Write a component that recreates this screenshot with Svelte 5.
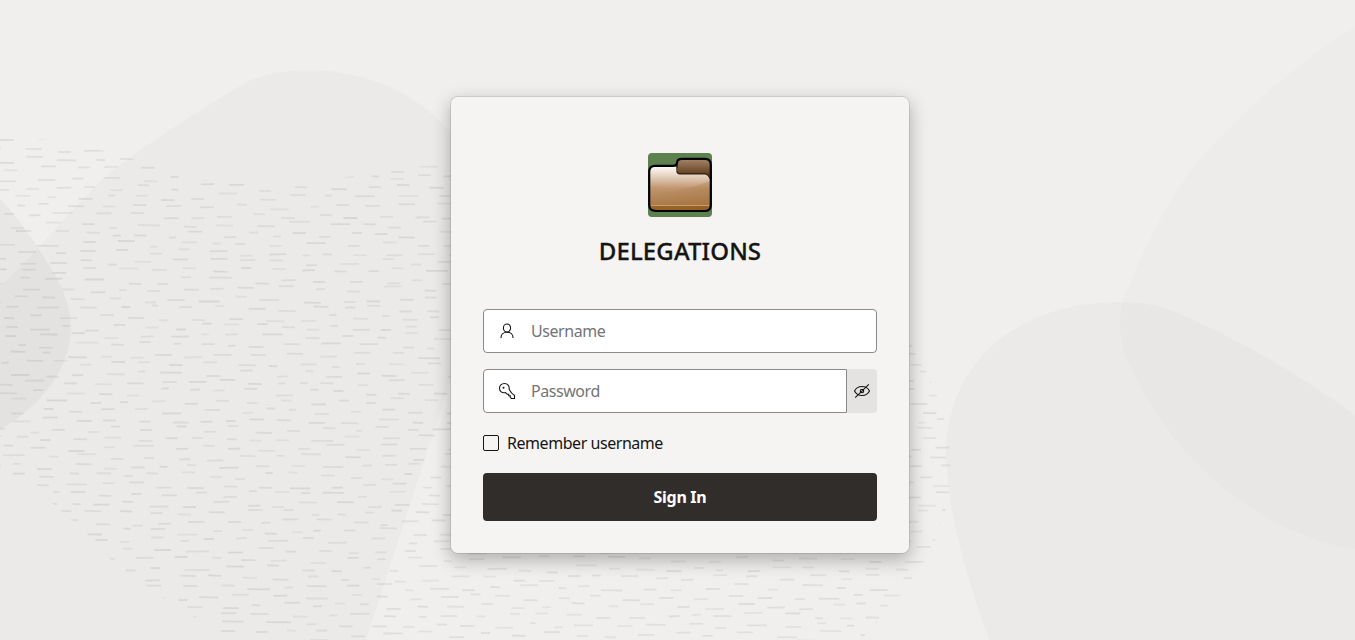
<script>
  let username = $state('');
  let password = $state('');
  let remember = $state(false);

  // Seeded generator keeps the dash texture identical on every load.
  let seed = 4207;
  const rnd = () => {
    seed = (seed * 16807) % 2147483647;
    return seed / 2147483647;
  };

  const dashes = [];
  for (let y = 141; y < 644; y += 9.3) {
    let x = -rnd() * 30;
    while (x < 960) {
      const w = 6 + rnd() * 8 + rnd() * rnd() * 13;
      const dy = (rnd() - 0.5) * 7;
      const tilt = (rnd() - 0.45) * 0.7;
      dashes.push({
        d: `M${x.toFixed(1)} ${(y + dy).toFixed(1)}l${w.toFixed(1)} ${tilt.toFixed(1)}`,
        o: 0.05 + rnd() * 0.03,
      });
      x += w + 11 + rnd() * 14;
    }
  }
</script>

<svg class="backdrop" viewBox="0 0 1355 640" preserveAspectRatio="xMidYMid slice" aria-hidden="true">
  <defs>
    <clipPath id="field">
      <path d="M0 136C60 138 120 153 160 168C220 192 320 188 385 168L450 164L860 280C925 345 951 415 951 470C948 540 910 590 860 640H240C190 618 140 585 100 550C70 514 30 484 0 471Z" />
    </clipPath>
  </defs>
  <g fill="#000" fill-opacity=".021">
    <path d="M0 286C16 271 25 262 38 248C58 226 90 189 117 167C140 149 220 96 247 82C286 62 390 60 451 133C510 200 480 300 449 385L366 640H0Z" />
    <path fill-opacity=".03" d="M0 199C13 212 28 232 38 248C57 276 71 300 71 327C71 370 40 406 0 430Z" />
    <path fill-opacity=".012" d="M1355 27C1307 55 1247 106 1200 159C1172 190 1141 254 1127 290C1116 312 1118 342 1130 366C1164 443 1243 530 1355 550Z" />
    <path d="M989 640C967 580 946 506 946 453C946 367 1012 302 1120 302C1140 302 1157 305 1173 311C1240 339 1303 377 1355 415V640Z" />
  </g>
  <g clip-path="url(#field)" fill="none" stroke="#000" stroke-width="1.8">
    {#each dashes as dash}
      <path d={dash.d} stroke-opacity={dash.o} />
    {/each}
  </g>
</svg>

<main>
  <form class="card" onsubmit={(e) => e.preventDefault()}>
    <svg class="logo" width="64" height="64" viewBox="0 0 64 64" aria-hidden="true">
      <defs>
        <linearGradient id="front" x1="0" y1="0" x2="0" y2="1">
          <stop offset="0" stop-color="#fffdfa" />
          <stop offset=".18" stop-color="#eadbce" />
          <stop offset=".5" stop-color="#c0956e" />
          <stop offset="1" stop-color="#a3713d" />
        </linearGradient>
        <linearGradient id="tab" x1="0" y1="0" x2="0" y2="1">
          <stop offset="0" stop-color="#a58467" />
          <stop offset=".6" stop-color="#61401f" />
        </linearGradient>
        <linearGradient id="shade" x1="0" y1="0" x2="1" y2="0">
          <stop offset="0" stop-color="#966328" stop-opacity="0" />
          <stop offset="1" stop-color="#966328" stop-opacity=".24" />
        </linearGradient>
      </defs>
      <rect width="64" height="64" rx="4" fill="#5d804f" />
      <path d="M29 24V11Q29 6 34 6H57Q63 6 63 12V32H29Z" fill="url(#tab)" />
      <path d="M1.200 19Q1.200 13 7 13H26Q28.600 13 29.600 16V18Q30 21 33 21H57Q63 22 63 28V52Q63 58 57 58H8Q1.200 58 1.200 52Z" fill="url(#front)" />
      <path d="M2 41Q35 38 62 28V52Q62 57 57 57H8Q2 57 2 52Z" fill="url(#shade)" />
      <path d="M3 53H61Q60 57.500 56 57.500H8Q4 57.500 3 53Z" fill="#8a571d" fill-opacity=".65" />
      <path d="M3.500 52.500H61" stroke="#d5a475" stroke-width=".8" />
      <path d="M29 12V18Q29 20.800 32 20.800H57Q60 21 62.500 26" fill="none" stroke="#321b08" stroke-width="1.300" />
      <path d="M1.200 52V19Q1.200 12.800 7 12.800H25Q29 12.800 29 10Q29 5.800 34 5.800H57Q62.800 5.800 62.800 12V52Q62.800 58 57 58H8Q1.200 58 1.200 52Z" fill="none" stroke="#000" stroke-width="2.200" />
    </svg>

    <h1>DELEGATIONS</h1>

    <div class="field">
      <svg class="icon" width="16" height="16" viewBox="0 0 16 16" aria-hidden="true">
        <ellipse cx="8" cy="5" rx="3.600" ry="4" />
        <path d="M2 15V14.500C2 11.500 4.500 9.200 8 9.200S14 11.500 14 14.500V15" />
      </svg>
      <input type="text" placeholder="Username" aria-label="Username" bind:value={username} />
    </div>

    <div class="row">
      <div class="field joined">
        <svg class="icon" width="18" height="18" viewBox="0 0 18 18" aria-hidden="true">
          <path d="M11.200 7.400C11.600 4 9.600 1.500 6.500 1.500S1.500 3.600 1.500 6.300C1.500 9.300 4 11.300 7.500 10.500L9.200 12.300H10.700V13.800H12.200V15.300L13.500 16.500H16.500V13.500Q13.500 11.500 11.200 7.400Z" />
          <circle cx="5.500" cy="5.700" r="1" class="solid" />
        </svg>
        <input type="password" placeholder="Password" aria-label="Password" bind:value={password} />
      </div>
      <button type="button" class="reveal" aria-label="Show password">
        <svg width="16" height="16" viewBox="0 0 16 16" aria-hidden="true">
          <path d="M.5 8C3.500 2 12.500 2 15.500 8C12.500 14 3.500 14 .5 8Z" />
          <circle cx="8" cy="8" r="1.700" />
          <path d="M1.200 14.600L14.800 1.400" />
        </svg>
      </button>
    </div>

    <label class="remember">
      <input type="checkbox" bind:checked={remember} />
      <span>Remember username</span>
    </label>

    <button type="submit" class="submit"><span>Sign In</span></button>
  </form>
</main>

<style>
  :global(body) {
    margin: 0;
    overflow: hidden;
    background: #f0efed;
    font-family: 'Noto Sans', sans-serif;
    color: #161513;
  }
  .backdrop {
    position: absolute;
    inset: 0;
    width: 100%;
    height: 100%;
    z-index: -1;
  }
  main {
    height: 640px;
    display: flex;
    justify-content: center;
    align-items: center;
    box-sizing: border-box;
    padding: 10px 0 0 5px;
  }
  .card {
    box-sizing: border-box;
    width: 460px;
    height: 458px;
    padding: 56px 32px 32px;
    border: 1px solid rgba(22, 21, 19, 0.1);
    background: #f5f4f2;
    background-clip: padding-box;
    border-radius: 8px;
    box-shadow: 0 6px 18px rgba(0, 0, 0, 0.27);
    display: flex;
    flex-direction: column;
  }
  .logo {
    align-self: center;
    flex: none;
  }
  h1 {
    margin: 17px 0 42px;
    font-size: 24px;
    line-height: 33px;
    font-weight: 500;
    letter-spacing: 0.1px;
    -webkit-text-stroke: 0.3px #161513;
    text-align: center;
  }
  .field {
    box-sizing: border-box;
    height: 44px;
    flex: none;
    display: flex;
    align-items: center;
    border: 1px solid #8b8a88;
    border-radius: 4px;
    background: #fff;
    overflow: hidden;
  }
  .icon {
    flex: none;
    width: 18px;
    margin-left: 14px;
  }
  svg.icon,
  .reveal svg {
    fill: none;
    stroke: #161513;
    stroke-width: 1.1;
  }
  svg.icon .solid {
    fill: #161513;
    stroke: none;
  }
  .field input {
    flex: 1;
    min-width: 0;
    border: 0;
    outline: 0;
    padding: 0 0 0 15px;
    font: inherit;
    font-size: 16px;
    letter-spacing: -0.45px;
    background: transparent;
    color: inherit;
  }
  .field input::placeholder {
    color: #757575;
    opacity: 1;
  }
  .row {
    display: flex;
    margin-top: 16px;
  }
  .joined {
    flex: 1;
    border-radius: 4px 0 0 4px;
  }
  .reveal {
    width: 30px;
    height: 44px;
    padding: 0;
    border: 0;
    border-radius: 0 4px 4px 0;
    background: #e4e3e1;
    display: flex;
    align-items: center;
    justify-content: center;
  }
  .remember {
    display: flex;
    align-items: center;
    gap: 8px;
    height: 24px;
    margin-top: 18px;
    font-size: 16px;
    letter-spacing: -0.45px;
  }
  .remember input {
    appearance: none;
    box-sizing: border-box;
    width: 16px;
    height: 16px;
    margin: 0;
    border: 1px solid #161513;
    border-radius: 2px;
  }
  .remember input:checked {
    background: #312d2a;
  }
  .submit {
    height: 48px;
    margin-top: 18px;
    padding: 0;
    border: 0;
    border-radius: 4px;
    background: #312d2a;
    color: #fff;
    font: 700 16px 'Noto Sans', sans-serif;
    letter-spacing: -0.3px;
  }
</style>
